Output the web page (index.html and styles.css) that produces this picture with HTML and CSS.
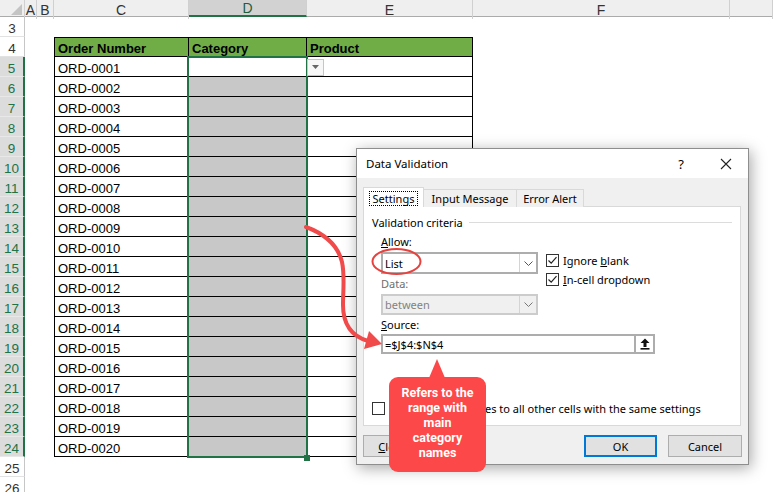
FILE: index.html
```html
<!DOCTYPE html>
<html>
<head>
<meta charset="utf-8">
<title>Data Validation</title>
<link rel="stylesheet" href="styles.css">
</head>
<body>
<div class="sheet">
  <div class="row colheads">
    <div class="corner"><svg width="25" height="16" viewBox="0 0 25 16"><polygon points="11,15 22,15 22,4" fill="#c4c4c4"/></svg></div>
    <div>A</div><div>B</div><div>C</div><div class="csel">D</div><div>E</div><div>F</div><div></div>
  </div>
  <div class="row"><div class="rh">3</div></div>
  <div class="row hdr"><div class="rh">4</div><div></div><div></div><div class="c t">Order Number</div><div class="d t">Category</div><div class="e t">Product</div></div>
  <div class="row"><div class="rh sel">5</div><div></div><div></div><div class="c t">ORD-0001</div><div class="d t"></div><div class="e t"></div></div>
  <div class="row"><div class="rh sel">6</div><div></div><div></div><div class="c t">ORD-0002</div><div class="d t fill"></div><div class="e t"></div></div>
  <div class="row"><div class="rh sel">7</div><div></div><div></div><div class="c t">ORD-0003</div><div class="d t fill"></div><div class="e t"></div></div>
  <div class="row"><div class="rh sel">8</div><div></div><div></div><div class="c t">ORD-0004</div><div class="d t fill"></div><div class="e t"></div></div>
  <div class="row"><div class="rh sel">9</div><div></div><div></div><div class="c t">ORD-0005</div><div class="d t fill"></div><div class="e t"></div></div>
  <div class="row"><div class="rh sel">10</div><div></div><div></div><div class="c t">ORD-0006</div><div class="d t fill"></div><div class="e t"></div></div>
  <div class="row"><div class="rh sel">11</div><div></div><div></div><div class="c t">ORD-0007</div><div class="d t fill"></div><div class="e t"></div></div>
  <div class="row"><div class="rh sel">12</div><div></div><div></div><div class="c t">ORD-0008</div><div class="d t fill"></div><div class="e t"></div></div>
  <div class="row"><div class="rh sel">13</div><div></div><div></div><div class="c t">ORD-0009</div><div class="d t fill"></div><div class="e t"></div></div>
  <div class="row"><div class="rh sel">14</div><div></div><div></div><div class="c t">ORD-0010</div><div class="d t fill"></div><div class="e t"></div></div>
  <div class="row"><div class="rh sel">15</div><div></div><div></div><div class="c t">ORD-0011</div><div class="d t fill"></div><div class="e t"></div></div>
  <div class="row"><div class="rh sel">16</div><div></div><div></div><div class="c t">ORD-0012</div><div class="d t fill"></div><div class="e t"></div></div>
  <div class="row"><div class="rh sel">17</div><div></div><div></div><div class="c t">ORD-0013</div><div class="d t fill"></div><div class="e t"></div></div>
  <div class="row"><div class="rh sel">18</div><div></div><div></div><div class="c t">ORD-0014</div><div class="d t fill"></div><div class="e t"></div></div>
  <div class="row"><div class="rh sel">19</div><div></div><div></div><div class="c t">ORD-0015</div><div class="d t fill"></div><div class="e t"></div></div>
  <div class="row"><div class="rh sel">20</div><div></div><div></div><div class="c t">ORD-0016</div><div class="d t fill"></div><div class="e t"></div></div>
  <div class="row"><div class="rh sel">21</div><div></div><div></div><div class="c t">ORD-0017</div><div class="d t fill"></div><div class="e t"></div></div>
  <div class="row"><div class="rh sel">22</div><div></div><div></div><div class="c t">ORD-0018</div><div class="d t fill"></div><div class="e t"></div></div>
  <div class="row"><div class="rh sel">23</div><div></div><div></div><div class="c t">ORD-0019</div><div class="d t fill"></div><div class="e t"></div></div>
  <div class="row"><div class="rh sel">24</div><div></div><div></div><div class="c t">ORD-0020</div><div class="d t fill"></div><div class="e t"></div></div>
  <div class="row"><div class="rh">25</div></div>
  <div class="row"><div class="rh">26</div></div>
</div>

<div class="selection"></div>
<div class="fill-handle"></div>
<div class="cell-drop"><svg width="9" height="5" viewBox="0 0 9 5"><polygon points="1,0 8,0 4.5,4" fill="#666"/></svg></div>

<div class="dialog">
  <div class="titlebar">
    <span class="title">Data Validation</span>
    <span class="help">?</span>
    <span class="close"><svg width="12" height="12" viewBox="0 0 12 12"><path d="M1 1 L11 11 M11 1 L1 11" stroke="#222" stroke-width="1.1"/></svg></span>
  </div>
  <div class="dbody">
    <div class="tabs">
      <div class="tab active"><span class="focus">Settings</span></div>
      <div class="tab tab-input">Input Message</div>
      <div class="tab tab-error">Error Alert</div>
    </div>
    <div class="panel">
      <div class="group-title"><span>Validation criteria</span><span class="rule"></span></div>
      <div class="criteria">
        <div class="left-col">
          <div class="lbl"><u>A</u>llow:</div>
          <div class="combo"><span class="val">List</span><span class="drop"><svg width="9" height="5" viewBox="0 0 9 5"><path d="M0.5 0.5 L4.5 4.5 L8.5 0.5" fill="none" stroke="#555" stroke-width="1"/></svg></span></div>
          <div class="lbl dim">Data:</div>
          <div class="combo disabled"><span class="val">between</span><span class="drop"><svg width="9" height="5" viewBox="0 0 9 5"><path d="M0.5 0.5 L4.5 4.5 L8.5 0.5" fill="none" stroke="#777" stroke-width="1"/></svg></span></div>
        </div>
        <div class="checks">
          <div class="check"><span class="box"><svg width="11" height="11" viewBox="0 0 11 11"><path d="M1.5 5.5 L4.2 8.2 L9.5 2.2" fill="none" stroke="#222" stroke-width="1.2"/></svg></span><span>Ignore <u>b</u>lank</span></div>
          <div class="check"><span class="box"><svg width="11" height="11" viewBox="0 0 11 11"><path d="M1.5 5.5 L4.2 8.2 L9.5 2.2" fill="none" stroke="#222" stroke-width="1.2"/></svg></span><span><u>I</u>n-cell dropdown</span></div>
        </div>
      </div>
      <div class="lbl src-lbl"><u>S</u>ource:</div>
      <div class="source"><span class="val">=$J$4:$N$4</span><span class="pick"><svg width="10" height="12" viewBox="0 0 10 12"><polygon points="5,0.5 9.5,5 6.5,5 6.5,9 3.5,9 3.5,5 0.5,5" fill="#111"/><rect x="0.5" y="10" width="9" height="1.6" fill="#111"/></svg></span></div>
      <div class="check apply"><span class="box"></span><span>Apply these changes to all other cells with the same settings</span></div>
    </div>
    <div class="buttons">
      <div class="btn"><u>C</u>lear All</div>
      <div class="spacer"></div>
      <div class="btn ok">OK</div>
      <div class="btn cancel">Cancel</div>
    </div>
  </div>
</div>

<svg class="overlay" width="773" height="492" viewBox="0 0 773 492">
  <ellipse cx="396.5" cy="261.5" rx="24" ry="12.5" fill="none" stroke="#e8423f" stroke-width="2"/>
  <path d="M306,227 C325,234 338,246 342,262 C345,276 343,290 343,305 C343,324 351,336 368,341" fill="none" stroke="#f04a4a" stroke-width="4" stroke-linecap="round"/>
  <polygon points="382,344 369,331 364,349" fill="#f04a4a"/>
</svg>

<div class="callout">Refers to the<br>range with<br>main<br>category<br>names</div>
</body>
</html>
```
FILE: styles.css
```css
* { box-sizing: border-box; margin: 0; padding: 0; }

body {
  width: 773px;
  height: 492px;
  overflow: hidden;
  background: #fff;
  position: relative;
  font-family: "Liberation Sans", Arial, sans-serif;
  color: #000;
}

.sheet { display: flex; flex-direction: column; }

.row {
  display: grid;
  grid-template-columns: 25px 12px 17px 135px 118px 166px 257px 1fr;
  height: 20px;
}

.colheads {
  height: 17px;
  background: #efefef;
  border-bottom: 1px solid #ababab;
}
.colheads > div {
  border-right: 1px solid #d0d0d0;
  display: flex;
  align-items: center;
  justify-content: center;
  font-size: 14px;
  color: #333;
}
.colheads .corner { display: block; }
.colheads .csel {
  background: #d2d2d2;
  color: #1e5e38;
  border-bottom: 2px solid #217346;
  height: 17px;
}

.rh {
  display: flex;
  align-items: center;
  justify-content: center;
  padding-top: 3px;
  font-size: 13.5px;
  color: #333;
  background: #fff;
  border-right: 1px solid #c6c6c6;
  border-bottom: 1px solid #e2e2e2;
}
.rh.sel {
  background: #dcdcdc;
  color: #217346;
  border-right: 2px solid #217346;
  border-bottom: 1px solid #e8e8e8;
}

.t {
  border-right: 1px solid #000;
  border-bottom: 1px solid #000;
  display: flex;
  align-items: center;
  padding: 3px 0 0 3px;
  font-size: 13px;
  white-space: nowrap;
}
.c.t { border-left: 1px solid #000; }
.hdr .t {
  border-top: 1px solid #000;
  background: #70ad47;
  font-weight: bold;
}
.fill { background: #c8c8c8; }

.selection {
  position: absolute;
  left: 187px;
  top: 56px;
  width: 121px;
  height: 402px;
  border: 2px solid #217346;
}
.fill-handle {
  position: absolute;
  left: 304px;
  top: 455px;
  width: 6px;
  height: 6px;
  background: #217346;
}
.cell-drop {
  position: absolute;
  left: 307px;
  top: 59px;
  width: 17px;
  height: 17px;
  border: 1px solid #c6c6c6;
  background: #f7f7f7;
  display: flex;
  align-items: center;
  justify-content: center;
}

/* Dialog */
.dialog {
  position: absolute;
  left: 356px;
  top: 148px;
  width: 393px;
  height: 317px;
  border: 1px solid #8e8e8e;
  background: #f0f0f0;
  box-shadow: 2px 3px 14px rgba(0,0,0,0.35);
  font-family: "Noto Sans", "Open Sans", sans-serif;
  font-size: 11px;
  color: #000;
  display: flex;
  flex-direction: column;
}
.titlebar {
  height: 29px;
  background: #fff;
  display: flex;
  align-items: center;
  padding: 0 12px 0 9px;
}
.title { flex: 1; font-size: 11.5px; }
.help {
  width: 20px;
  text-align: center;
  font-size: 13px;
  margin-right: 25px;
}
.close {
  width: 20px;
  display: flex;
  justify-content: center;
}

.dbody {
  flex: 1;
  padding: 9px 6px 0 6px;
  display: flex;
  flex-direction: column;
}
.tabs {
  display: flex;
  align-items: flex-end;
  height: 20px;
  margin-bottom: -1px;
  position: relative;
  z-index: 1;
}
.tab {
  height: 18px;
  border: 1px solid #d9d9d9;
  border-bottom: none;
  background: #f0f0f0;
  display: flex;
  align-items: center;
  justify-content: center;
}
.tab.active {
  width: 61px;
  height: 20px;
  background: #fff;
  padding-top: 1px;
}
.tab-input { width: 93px; border-left: none; }
.tab-error { width: 67px; border-left: none; }
.focus {
  border: 1px dotted #000;
  padding: 0 3px;
  line-height: 13px;
}

.panel {
  width: 378px;
  height: 220px;
  border: 1px solid #d9d9d9;
  background: #fff;
  padding: 7px 8px 0 8px;
}
.group-title {
  display: flex;
  align-items: center;
  height: 16px;
}
.rule {
  flex: 1;
  height: 1px;
  background: #dcdcdc;
  margin: 1px 0 0 6px;
}
.criteria {
  display: flex;
  margin: 4px 0 0 9px;
}
.left-col { width: 157px; }
.lbl { height: 16px; line-height: 16px; }
.dim { color: #6d6d6d; margin-top: 2px; }
.combo {
  margin-top: 2px;
  height: 22px;
  border: 2px solid #adadad;
  display: flex;
  align-items: center;
  background: #fff;
}
.combo .val { flex: 1; padding-left: 2px; }
.combo .drop {
  width: 17px;
  height: 100%;
  border-left: 1px solid #d4d4d4;
  display: flex;
  align-items: center;
  justify-content: center;
}
.combo.disabled {
  height: 21px;
  border-color: #cccccc;
  background: #f0f0f0;
  color: #838383;
}
.checks {
  margin-left: 8px;
  padding-top: 20px;
  display: flex;
  flex-direction: column;
  gap: 6px;
}
.check {
  display: flex;
  align-items: center;
  height: 13px;
  gap: 4px;
}
.box {
  width: 13px;
  height: 13px;
  border: 1px solid #333;
  background: #fff;
  display: flex;
  align-items: center;
  justify-content: center;
}
.src-lbl { margin: 2px 0 0 9px; }
.source {
  margin: 1px 0 0 9px;
  width: 274px;
  height: 20px;
  border: 2px solid #adadad;
  display: flex;
  align-items: center;
}
.source .val { flex: 1; padding-left: 2px; }
.source .pick {
  width: 19px;
  height: 100%;
  border-left: 2px solid #adadad;
  display: flex;
  align-items: center;
  justify-content: center;
}
.apply {
  margin-top: 48px;
  gap: 5px;
}

.buttons {
  display: flex;
  margin-top: 9px;
  height: 22px;
}
.spacer { flex: 1; }
.btn {
  width: 73px;
  height: 22px;
  border: 1px solid #adadad;
  background: #e1e1e1;
  display: flex;
  align-items: center;
  justify-content: center;
}
.btn.ok {
  border: 2px solid #0078d7;
  margin-right: 11px;
}
.btn.cancel { width: 74px; }

.overlay {
  position: absolute;
  left: 0;
  top: 0;
  pointer-events: none;
}

.callout {
  position: absolute;
  left: 389px;
  top: 377px;
  width: 97px;
  height: 95px;
  background: #fc4848;
  border-radius: 9px;
  color: #fff;
  font-family: Roboto, "Liberation Sans", sans-serif;
  font-weight: bold;
  font-size: 12.5px;
  line-height: 15px;
  text-align: center;
  padding-top: 8px;
}
.callout::before {
  content: "";
  position: absolute;
  left: 40px;
  top: -18px;
  border-left: 8px solid transparent;
  border-right: 8px solid transparent;
  border-bottom: 19px solid #fc4848;
}
```
